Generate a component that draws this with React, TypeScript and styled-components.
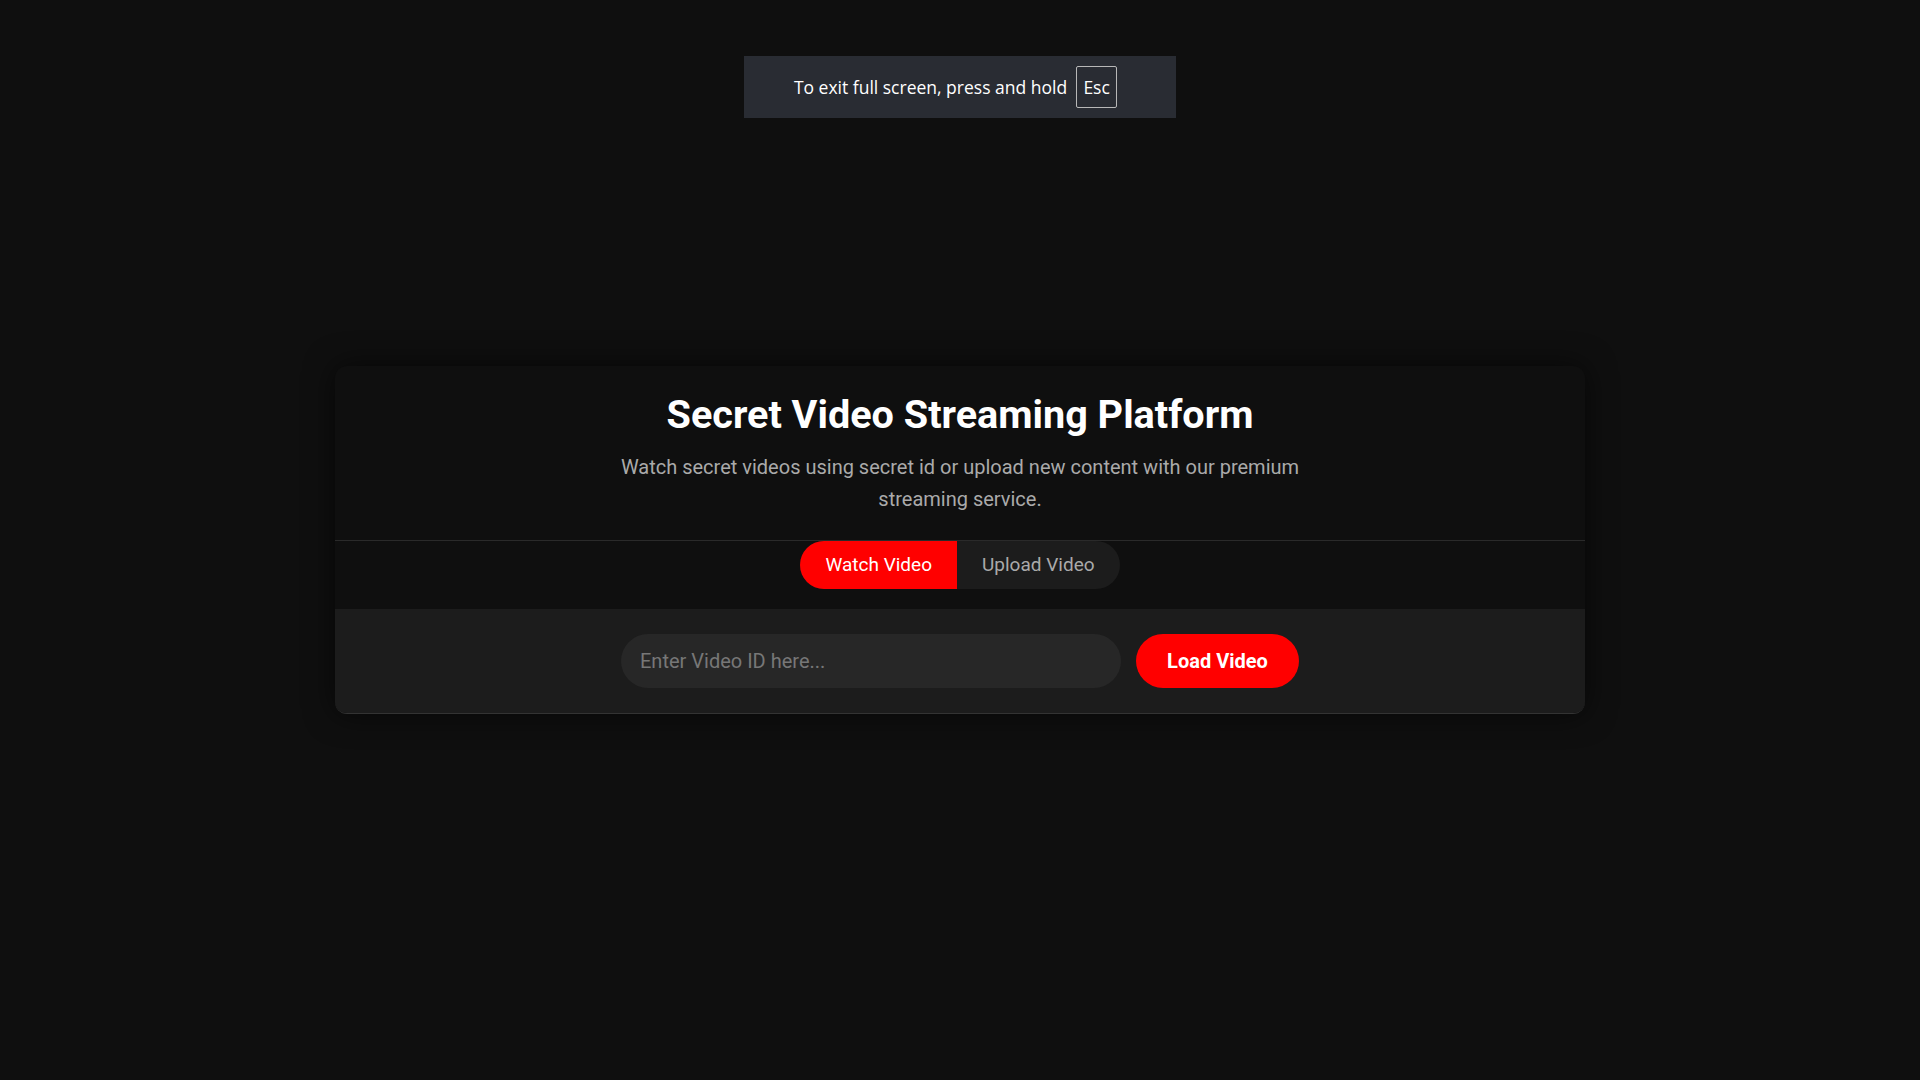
import React from "react";
import styled, { createGlobalStyle } from "styled-components";

const GlobalStyle = createGlobalStyle`
  html, body {
    margin: 0;
    padding: 0;
    background: #0f0f0f;
    font-family: Roboto, "Liberation Sans", sans-serif;
    color: #ffffff;
  }
  * { box-sizing: border-box; }
`;

const Page = styled.div`
  min-height: 1080px;
  display: flex;
  flex-direction: column;
  align-items: center;
  padding-top: 56px;
`;

const Toast = styled.div`
  width: 432px;
  height: 62px;
  background: #292c33;
  display: flex;
  align-items: center;
  justify-content: center;
  gap: 9px;
  padding-right: 9px;
  font-family: "Open Sans", "Noto Sans", sans-serif;
  font-size: 17.5px;
  color: #ffffff;
`;

const Key = styled.span`
  display: inline-flex;
  align-items: center;
  justify-content: center;
  width: 41px;
  height: 42px;
  border: 1px solid #b8b8b8;
  border-radius: 2px;
`;

const Card = styled.main`
  width: 1250px;
  margin-top: 248px;
  background: #0f0f0f;
  border-radius: 12px;
  box-shadow: 0 0 30px rgba(0, 0, 0, 0.6);
  border-bottom: 1px solid #333333;
  overflow: hidden;
`;

const Header = styled.header`
  padding: 25px 0 25px;
  text-align: center;
  border-bottom: 1px solid #2a2a2a;
`;

const Title = styled.h1`
  margin: 0 0 12px;
  font-size: 39.6px;
  line-height: 1.2;
  font-weight: 700;
  color: #ffffff;
`;

const Subtitle = styled.p`
  margin: 0 auto;
  max-width: 700px;
  font-size: 20px;
  line-height: 32px;
  color: #aaaaaa;
`;

const TabRow = styled.nav`
  display: flex;
  justify-content: center;
  padding: 0 0 20px;
`;

const Tabs = styled.div`
  display: flex;
  background: #1c1c1c;
  border-radius: 24px;
  overflow: hidden;
`;

const Tab = styled.button<{ $active?: boolean }>`
  border: none;
  margin: 0;
  height: 48px;
  padding: 0 25px;
  font-family: Roboto, "Liberation Sans", sans-serif;
  font-size: 19px;
  background: ${(p) => (p.$active ? "#ff0000" : "transparent")};
  color: ${(p) => (p.$active ? "#ffffff" : "#aaaaaa")};
  cursor: pointer;
`;

const Section = styled.section`
  background: #1c1c1c;
  padding: 25px;
  display: flex;
  justify-content: center;
  gap: 15px;
`;

const Input = styled.input`
  width: 500px;
  height: 54px;
  border: none;
  outline: none;
  border-radius: 27px;
  background: #272727;
  padding: 0 19px;
  font-family: Roboto, "Liberation Sans", sans-serif;
  font-size: 20px;
  color: #ffffff;
  &::placeholder {
    color: #777777;
  }
`;

const LoadButton = styled.button`
  width: 163px;
  height: 54px;
  border: none;
  border-radius: 27px;
  background: #ff0000;
  color: #ffffff;
  font-family: Roboto, "Liberation Sans", sans-serif;
  font-size: 20px;
  font-weight: 700;
  cursor: pointer;
`;

export default function App() {
  return (
    <>
      <GlobalStyle />
      <Page>
        <Toast>
          <span>To exit full screen, press and hold</span>
          <Key>Esc</Key>
        </Toast>
        <Card>
          <Header>
            <Title>Secret Video Streaming Platform</Title>
            <Subtitle>
              Watch secret videos using secret id or upload new content with our premium
              streaming service.
            </Subtitle>
          </Header>
          <TabRow>
            <Tabs>
              <Tab $active>Watch Video</Tab>
              <Tab>Upload Video</Tab>
            </Tabs>
          </TabRow>
          <Section>
            <Input placeholder="Enter Video ID here..." />
            <LoadButton>Load Video</LoadButton>
          </Section>
        </Card>
      </Page>
    </>
  );
}
